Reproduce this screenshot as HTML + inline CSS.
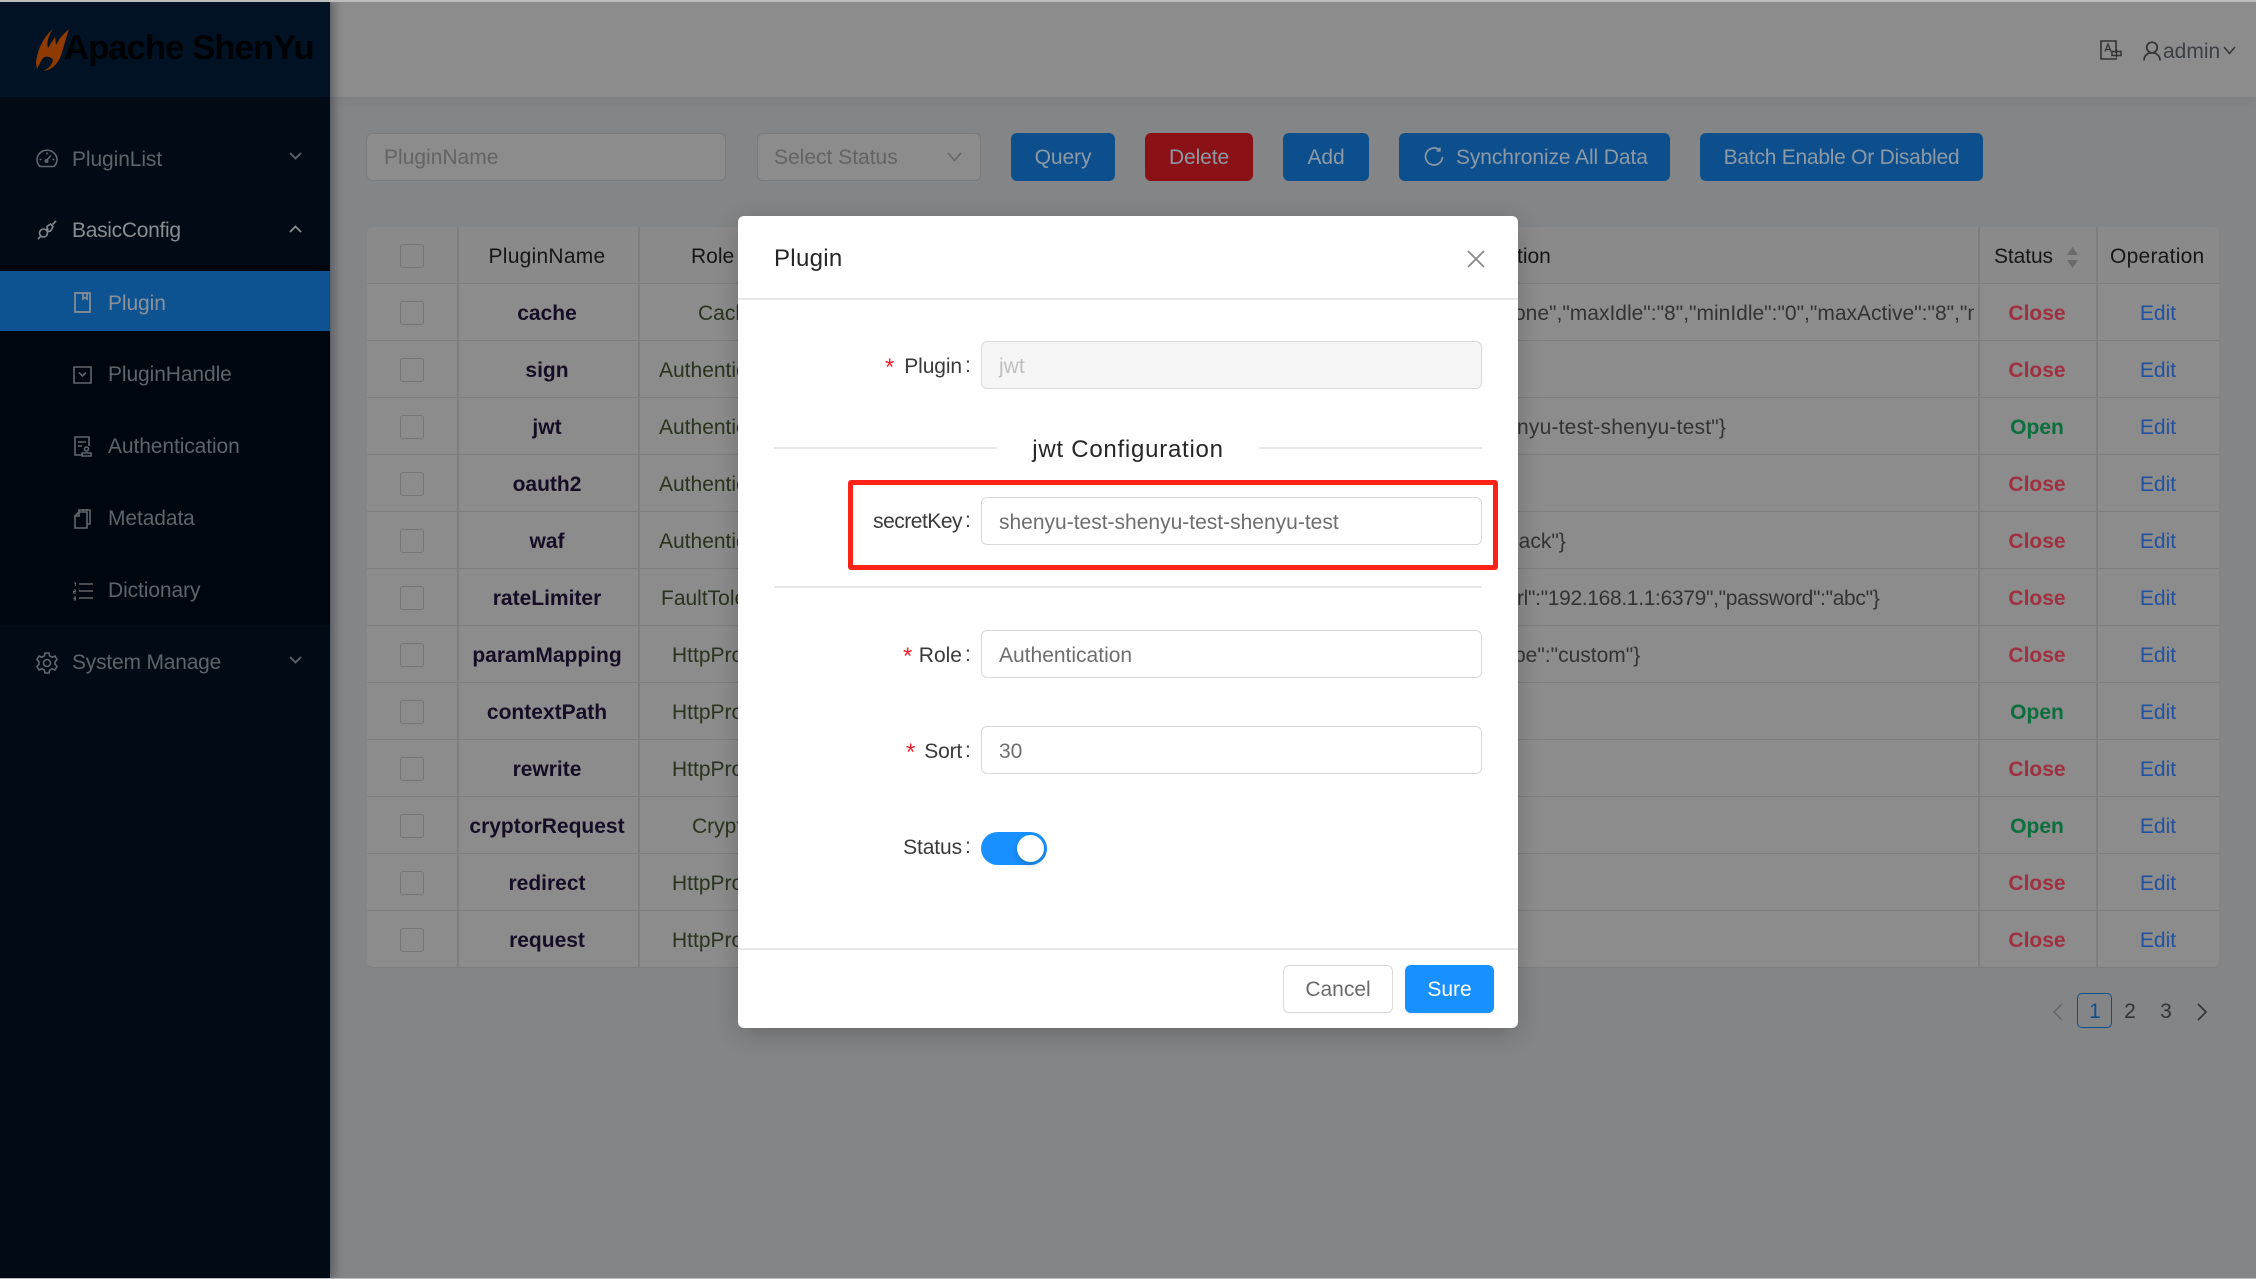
<!DOCTYPE html>
<html><head><meta charset="utf-8"><title>Apache ShenYu</title>
<style>
*{box-sizing:border-box;margin:0;padding:0}
html,body{width:2256px;height:1279px;overflow:hidden;background:#848586}
body{position:relative;font-family:"Liberation Sans","Noto Sans CJK SC",sans-serif;font-size:21px;color:#313131}
div,span{position:absolute;white-space:nowrap}
svg{position:absolute;overflow:visible}
.m{color:#5f6468;line-height:30px;height:30px;letter-spacing:-.1px}
.ic{fill:none;stroke:#62676b;stroke-width:1.6}
.ch{fill:none;stroke:#5f6468;stroke-width:1.8}
.inp{background:#8c8c8c;border:1.5px solid #7b7b7b;border-radius:6px;height:48px;top:133px;color:#636363;line-height:48px;padding-left:17px}
.b{top:133px;height:48px;border-radius:6px;background:#0d4f8c;color:#8d99a5;line-height:49px;text-align:center;letter-spacing:-.1px}
.r{left:367px;width:1852px;height:57px;border-bottom:1.5px solid #7e7e7e;line-height:59px}
.x{top:0;width:1.5px;height:57px;background:#7e7e7e}
.cb{left:33px;top:17px;width:24px;height:24px;border:1.5px solid #757575;border-radius:3px}
.n{left:90px;width:180px;text-align:center;font-weight:bold;color:#170c26}
.ro{color:#29331d}
.s{left:1610px;width:120px;text-align:center;font-weight:bold}
.cl{color:#a0303f}.op{color:#0b6e3c}
.e{left:1730px;width:122px;text-align:center;color:#22529f}
.d{color:#333}
.l{color:#3a3a3a;text-align:right;line-height:30px;height:30px}
.st{color:#f5222d;line-height:30px;height:30px;font-size:24px}
.mi{left:243px;width:501px;height:48px;border:1.5px solid #d9d9d9;border-radius:6px;background:#fff;color:#6e6e6e;line-height:49px;padding-left:17px}
.pg{top:997px;width:36px;text-align:center;line-height:30px;color:#333}
</style></head><body>

<!-- header -->
<div style="left:330px;top:0;width:1926px;height:97px;background:#8c8c8c;box-shadow:0 2px 10px rgba(0,0,0,.06)"></div>
<svg style="left:2100px;top:40px" width="22" height="20" viewBox="0 0 22 20" fill="none" stroke="#333" stroke-width="1.6"><path d="M16 13V1H1v18h15v-1"/><path d="M5 11.5 8 4l3 7.5M6 9.5h4" stroke-width="1.3"/><path d="M12 11.5h9v4h-9zM16.5 9.5v8" stroke-width="1.5"/></svg>
<svg style="left:2143px;top:41px" width="18" height="20" viewBox="0 0 18 20" fill="none" stroke="#333" stroke-width="1.7"><circle cx="9" cy="6.5" r="5.3"/><path d="M1 19.5c0-5 3.5-7.7 8-7.700s8 2.7 8 7.700"/></svg>
<span style="left:2163px;top:37px;line-height:30px;color:#3b3f45">admin</span>
<svg style="left:2223px;top:46px" width="13" height="9" viewBox="0 0 13 9" fill="none" stroke="#333" stroke-width="1.5"><path d="M1 1l5.5 6.5L12 1"/></svg>

<!-- sidebar -->
<div style="left:0;top:0;width:330px;height:1279px;background:#000b16;box-shadow:3px 0 10px rgba(0,15,30,.4)"></div>
<div style="left:0;top:0;width:330px;height:97px;background:#001223"></div>
<svg style="left:0;top:0" width="80" height="80" viewBox="0 0 80 80"><path fill="#8f3b00" d="M53 29C44 36 37 50 36 63L37 69C39 65 41 61 43 58 45 56 50 56 53 60 52 65 48 69 43 71 52 70 57 64 60 58 63 50 66 38 69 29 65 33 61 36 59 40L56 45 55 37 48 48C46 42 49 35 53 29Z"/></svg>
<span style="left:64px;top:26px;font-size:34.5px;line-height:44px;font-weight:bold;color:#010203;letter-spacing:-.85px">Apache ShenYu</span>

<svg style="left:36px;top:149px" width="22" height="19" viewBox="0 0 22 19" class="ic"><path d="M4 17.500A10 9.500 0 1 1 18 17.500H4z"/><path d="M10 12l5-5.500M3.500 10.500h2M16.500 10.500h2M11 3.500v2"/><circle cx="10.500" cy="12" r="1.200"/></svg>
<span class="m" style="left:72px;top:145px">PluginList</span>
<svg style="left:288px;top:151px" width="15" height="10" viewBox="0 0 15 10" class="ch"><path d="M2 2l5.5 5.5L13 2"/></svg>

<svg style="left:37px;top:220px" width="20" height="20" viewBox="0 0 20 20" fill="none" stroke="#85888b" stroke-width="1.6"><path d="M1 19l3-3"/><circle cx="6.5" cy="13" r="4"/><path d="M10 6.500l3.500-2.500 2.500 2.500-2.500 4.500-2.500.500z"/><path d="M15.500 4.500L19 1M9 10l2-2"/></svg>
<span class="m" style="left:72px;top:216px;color:#8b8e91;letter-spacing:-.3px">BasicConfig</span>
<svg style="left:288px;top:224px" width="15" height="10" viewBox="0 0 15 10" fill="none" stroke="#8b8e91" stroke-width="1.8"><path d="M2 8l5.5-5.500L13 8"/></svg>

<div style="left:0;top:265px;width:330px;height:360px;background:#00060d"></div>
<div style="left:0;top:271px;width:330px;height:60px;background:#0d5291"></div>
<svg style="left:74px;top:292px" width="17" height="21" viewBox="0 0 17 21" fill="none" stroke="#8a8f95" stroke-width="1.7"><path d="M1 1h15v19H1zM9 1v6l2-1.5L13 7V1"/></svg>
<span class="m" style="left:108px;top:289px;color:#8c9298">Plugin</span>

<svg style="left:73px;top:366px" width="19" height="18" viewBox="0 0 19 18" class="ic"><path d="M1 1h17v16H1zM6 6.500l3.500 3.500L13 6.500"/></svg>
<span class="m" style="left:108px;top:360px">PluginHandle</span>
<svg style="left:74px;top:436px" width="18" height="21" viewBox="0 0 18 21" class="ic"><path d="M9 19H1V1h14v9M4 6h8M4 10h4"/><circle cx="12.500" cy="13" r="2"/><path d="M8 17h9v3H8z"/></svg>
<span class="m" style="left:108px;top:432px">Authentication</span>
<svg style="left:74px;top:508px" width="17" height="21" viewBox="0 0 17 21" class="ic"><path d="M1 8l4-4h8v16H1zM1 8h4V4M5 4V2h11v14h-3M9 1v2M13 1v2"/></svg>
<span class="m" style="left:108px;top:504px">Metadata</span>
<svg style="left:73px;top:582px" width="20" height="19" viewBox="0 0 20 19" class="ic"><path d="M6 2h14M6 9h14M6 16h14"/><path d="M1 1h1.500v3M.5 8h2v1.500h-2V11h2.500M.5 15h2v1.500h-2h2V18h-2" stroke-width="1"/></svg>
<span class="m" style="left:108px;top:576px">Dictionary</span>

<svg style="left:36px;top:652px" width="22" height="22" viewBox="0 0 22 22" class="ic"><path d="M9 1h4l.7 3 2.500 1.200L19 4l2 3.500-2 2.300v2.400l2 2.300L19 18l-2.800-1.200-2.500 1.200L13 21H9l-.7-3-2.500-1.200L3 18l-2-3.500 2-2.300V9.800L1 7.500 3 4l2.800 1.200L8.300 4z"/><circle cx="11" cy="11" r="3.500"/></svg>
<span class="m" style="left:72px;top:648px;letter-spacing:-.2px">System Manage</span>
<svg style="left:288px;top:655px" width="15" height="10" viewBox="0 0 15 10" class="ch"><path d="M2 2l5.5 5.500L13 2"/></svg>

<!-- toolbar -->
<div class="inp" style="left:366px;width:360px">PluginName</div>
<div class="inp" style="left:757px;width:224px;padding-left:16px">Select Status</div>
<svg style="left:947px;top:152px" width="15" height="10" viewBox="0 0 15 10" fill="none" stroke="#666" stroke-width="1.5"><path d="M1 1l6.500 7.500L14 1"/></svg>
<div class="b" style="left:1011px;width:104px">Query</div>
<div class="b" style="left:1145px;width:108px;background:#8a1116">Delete</div>
<div class="b" style="left:1283px;width:86px">Add</div>
<div class="b" style="left:1399px;width:271px;text-align:left;padding-left:57px">Synchronize All Data</div>
<svg style="left:1424px;top:147px" width="20" height="20" viewBox="0 0 20 20" fill="none" stroke="#8d99a5" stroke-width="1.7"><path d="M15.5 3A8.500 8.500 0 1 0 18.500 10"/><path d="M16 .5V4h-3.500" stroke-width="1.300"/></svg>
<div class="b" style="left:1700px;width:283px;letter-spacing:-.25px">Batch Enable Or Disabled</div>

<!-- table -->
<div style="left:367px;top:227px;width:1852px;height:741px;background:#8c8c8c;border-radius:6px"></div>
<div style="left:367px;top:227px;width:1852px;height:57px;background:#8a8a8a;border-radius:6px 6px 0 0;border-bottom:1.5px solid #7e7e7e;line-height:60px;color:#161616">
  <div class="x" style="left:90px"></div><div class="x" style="left:271px"></div><div class="x" style="left:1611px"></div><div class="x" style="left:1729px"></div>
  <div class="cb"></div>
  <span style="left:90px;width:180px;text-align:center;top:0;letter-spacing:.25px">PluginName</span>
  <span style="left:324px;top:0">Role</span>
  <span style="left:1150px;top:0">tion</span>
  <span style="left:1627px;top:0;letter-spacing:-.1px">Status</span>
  <span style="left:1743px;top:0;letter-spacing:.25px">Operation</span>
  <svg style="left:1699px;top:20px" width="13" height="21" viewBox="0 0 13 21" fill="#6a6a6a"><path d="M6.500 0l5.500 8H1zM6.500 21L1 13h11z"/></svg>
</div>

<div class="r" style="top:284px"><div class="x" style="left:90px"></div><div class="x" style="left:271px"></div><div class="x" style="left:1611px"></div><div class="x" style="left:1729px"></div><div class="cb"></div><span class="n">cache</span><span class="ro" style="left:331px">Cache</span><div class="d" style="left:1147px;width:460px;overflow:hidden">one","maxIdle":"8","minIdle":"0","maxActive":"8","maxWait":"-1"</div><span class="s cl">Close</span><span class="e">Edit</span></div>
<div class="r" style="top:341px"><div class="x" style="left:90px"></div><div class="x" style="left:271px"></div><div class="x" style="left:1611px"></div><div class="x" style="left:1729px"></div><div class="cb"></div><span class="n">sign</span><span class="ro" style="left:292px">Authentication</span><span class="s cl">Close</span><span class="e">Edit</span></div>
<div class="r" style="top:398px"><div class="x" style="left:90px"></div><div class="x" style="left:271px"></div><div class="x" style="left:1611px"></div><div class="x" style="left:1729px"></div><div class="cb"></div><span class="n">jwt</span><span class="ro" style="left:292px">Authentication</span><span class="d" style="left:1150px;letter-spacing:.2px">nyu-test-shenyu-test"}</span><span class="s op">Open</span><span class="e">Edit</span></div>
<div class="r" style="top:455px"><div class="x" style="left:90px"></div><div class="x" style="left:271px"></div><div class="x" style="left:1611px"></div><div class="x" style="left:1729px"></div><div class="cb"></div><span class="n">oauth2</span><span class="ro" style="left:292px">Authentication</span><span class="s cl">Close</span><span class="e">Edit</span></div>
<div class="r" style="top:512px"><div class="x" style="left:90px"></div><div class="x" style="left:271px"></div><div class="x" style="left:1611px"></div><div class="x" style="left:1729px"></div><div class="cb"></div><span class="n">waf</span><span class="ro" style="left:292px">Authentication</span><span class="d" style="left:1147px">lack"}</span><span class="s cl">Close</span><span class="e">Edit</span></div>
<div class="r" style="top:569px"><div class="x" style="left:90px"></div><div class="x" style="left:271px"></div><div class="x" style="left:1611px"></div><div class="x" style="left:1729px"></div><div class="cb"></div><span class="n">rateLimiter</span><span class="ro" style="left:294px">FaultTolerance</span><span class="d" style="left:1150px;letter-spacing:-.33px">rl":"192.168.1.1:6379","password":"abc"}</span><span class="s cl">Close</span><span class="e">Edit</span></div>
<div class="r" style="top:626px"><div class="x" style="left:90px"></div><div class="x" style="left:271px"></div><div class="x" style="left:1611px"></div><div class="x" style="left:1729px"></div><div class="cb"></div><span class="n">paramMapping</span><span class="ro" style="left:305px">HttpProcess</span><span class="d" style="left:1147px">pe":"custom"}</span><span class="s cl">Close</span><span class="e">Edit</span></div>
<div class="r" style="top:683px"><div class="x" style="left:90px"></div><div class="x" style="left:271px"></div><div class="x" style="left:1611px"></div><div class="x" style="left:1729px"></div><div class="cb"></div><span class="n">contextPath</span><span class="ro" style="left:305px">HttpProcess</span><span class="s op">Open</span><span class="e">Edit</span></div>
<div class="r" style="top:740px"><div class="x" style="left:90px"></div><div class="x" style="left:271px"></div><div class="x" style="left:1611px"></div><div class="x" style="left:1729px"></div><div class="cb"></div><span class="n">rewrite</span><span class="ro" style="left:305px">HttpProcess</span><span class="s cl">Close</span><span class="e">Edit</span></div>
<div class="r" style="top:797px"><div class="x" style="left:90px"></div><div class="x" style="left:271px"></div><div class="x" style="left:1611px"></div><div class="x" style="left:1729px"></div><div class="cb"></div><span class="n">cryptorRequest</span><span class="ro" style="left:325px">Cryptor</span><span class="s op">Open</span><span class="e">Edit</span></div>
<div class="r" style="top:854px"><div class="x" style="left:90px"></div><div class="x" style="left:271px"></div><div class="x" style="left:1611px"></div><div class="x" style="left:1729px"></div><div class="cb"></div><span class="n">redirect</span><span class="ro" style="left:305px">HttpProcess</span><span class="s cl">Close</span><span class="e">Edit</span></div>
<div class="r" style="top:911px;border-radius:0 0 6px 6px"><div class="x" style="left:90px"></div><div class="x" style="left:271px"></div><div class="x" style="left:1611px"></div><div class="x" style="left:1729px"></div><div class="cb"></div><span class="n">request</span><span class="ro" style="left:305px">HttpProcess</span><span class="s cl">Close</span><span class="e">Edit</span></div>

<!-- pagination -->
<svg style="left:2052px;top:1003px" width="12" height="18" viewBox="0 0 12 18" fill="none" stroke="#666" stroke-width="1.6"><path d="M10 1L2 9l8 8"/></svg>
<div style="left:2077px;top:993px;width:35px;height:35px;border:1.5px solid #0d4f8c;border-radius:5px"></div>
<span class="pg" style="left:2077px;color:#0d4f8c">1</span>
<span class="pg" style="left:2112px">2</span>
<span class="pg" style="left:2148px">3</span>
<svg style="left:2196px;top:1003px" width="12" height="18" viewBox="0 0 12 18" fill="none" stroke="#333" stroke-width="1.6"><path d="M2 1l8 8-8 8"/></svg>

<!-- modal -->
<div style="left:738px;top:216px;width:780px;height:812px;background:#fff;border-radius:6px;box-shadow:0 6px 24px rgba(0,0,0,.2)">
  <span style="left:36px;top:26px;font-size:24px;line-height:34px;color:#262626;letter-spacing:.3px">Plugin</span>
  <svg style="left:729px;top:34px" width="18" height="18" viewBox="0 0 18 18" fill="none" stroke="#8a8a8a" stroke-width="1.8"><path d="M1 1l16 16M17 1L1 17"/></svg>
  <div style="left:0;top:82px;width:780px;height:1.5px;background:#e8e8e8"></div>

  <span class="st" style="left:147px;top:137px">*</span>
  <span class="l" style="right:556px;top:136px;letter-spacing:-.1px">Plugin</span><span class="l" style="left:227px;top:135px">:</span>
  <div class="mi" style="top:125px;background:#f5f5f5;color:#bfbfbf">jwt</div>

  <div style="left:36px;top:231px;width:223px;height:1.5px;background:#e8e8e8"></div>
  <div style="left:521px;top:231px;width:223px;height:1.5px;background:#e8e8e8"></div>
  <span style="left:258px;width:264px;text-align:center;top:217px;font-size:24px;line-height:34px;color:#262626;letter-spacing:.75px">jwt Configuration</span>

  <div style="left:110px;top:264px;width:650px;height:90px;border:5px solid #fe2317;border-radius:3px"></div>
  <span class="l" style="right:556px;top:291px;letter-spacing:-.5px">secretKey</span><span class="l" style="left:227px;top:290px">:</span>
  <div class="mi" style="top:281px">shenyu-test-shenyu-test-shenyu-test</div>
  <div style="left:36px;top:370px;width:708px;height:1.5px;background:#e8e8e8"></div>

  <span class="st" style="left:165px;top:426px">*</span>
  <span class="l" style="right:556px;top:425px">Role</span><span class="l" style="left:227px;top:424px">:</span>
  <div class="mi" style="top:414px">Authentication</div>

  <span class="st" style="left:168px;top:522px">*</span>
  <span class="l" style="right:556px;top:521px;letter-spacing:-.2px">Sort</span><span class="l" style="left:227px;top:520px">:</span>
  <div class="mi" style="top:510px">30</div>

  <span class="l" style="right:556px;top:617px;letter-spacing:-.1px">Status</span><span class="l" style="left:227px;top:616px">:</span>
  <div style="left:243px;top:616px;width:66px;height:33px;background:#1890ff;border-radius:17px"></div>
  <div style="left:279px;top:619px;width:27px;height:27px;background:#fff;border-radius:50%;box-shadow:0 3px 6px rgba(0,35,11,.2)"></div>

  <div style="left:0;top:732px;width:780px;height:1.5px;background:#e8e8e8"></div>
  <div style="left:545px;top:749px;width:110px;height:48px;border:1.5px solid #d9d9d9;border-radius:6px;text-align:center;line-height:47px;color:#6a6a6a;box-shadow:0 2px 0 rgba(0,0,0,.015)">Cancel</div>
  <div style="left:667px;top:749px;width:89px;height:48px;background:#1890ff;border-radius:6px;text-align:center;line-height:49px;color:#fff;box-shadow:0 2px 0 rgba(0,0,0,.045)">Sure</div>
</div>

<!-- edge lines from the capture -->
<div style="left:0;top:0;width:2256px;height:1.5px;background:#bdbdbd"></div>
<div style="left:0;top:1278px;width:2256px;height:1px;background:#bdbdbd"></div>
</body></html>
